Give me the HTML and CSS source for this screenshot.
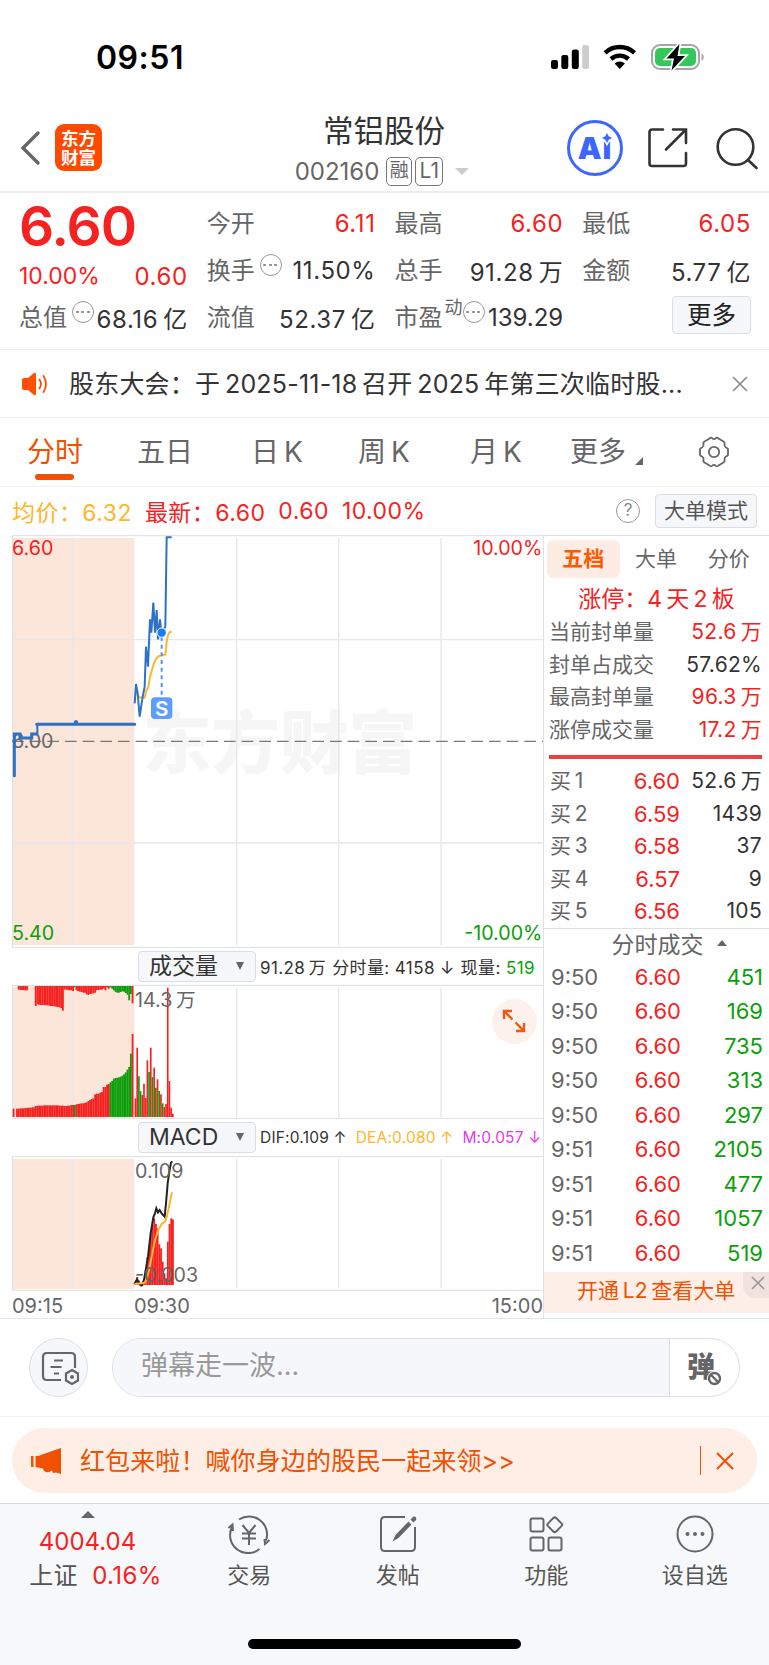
FILE: index.html
```html
<!DOCTYPE html>
<html lang="zh-CN">
<head>
    <meta charset="UTF-8">
    <meta name="viewport" content="width=device-width, initial-scale=1.0">
    <title>常铝股份 002160</title>
    <link rel="stylesheet" href="styles.css">
</head>
<body>
    <div class="status-bar">
        <span class="clock">09:51</span>
        <svg width="156" height="30" viewBox="0 0 156 30">
            <rect x="0" y="17" width="7" height="9" rx="2.2"/>
            <rect x="10.3" y="12" width="7" height="14" rx="2.2"/>
            <rect x="20.8" y="6.5" width="7" height="19.5" rx="2.2"/>
            <rect x="31.2" y="2" width="6.8" height="24" rx="2.2" fill="#ccc"/>
            <g fill="none" stroke="#000" stroke-width="4.4">
                <path d="M54 9.8a21.5 21.5 0 0 1 29.5 0"/>
                <path d="M60 16a13 13 0 0 1 17.5 0"/>
            </g>
            <path d="M63.6 20.6a7.4 7.4 0 0 1 10.3 0L68.8 26z"/>
            <rect x="101" y="2" width="47" height="24" rx="8" fill="none" stroke="#a5a5a5" stroke-width="2"/>
            <path d="M150.5 10.5c3 1.2 3 6 0 7.4z" fill="#a5a5a5"/>
            <rect x="104" y="5" width="41" height="18" rx="5" fill="#34c759"/>
            <path d="M128.500 1L115.500 15.500h7.500L120.500 27.500l13.500-14.500h-7.500z" stroke="#fff" stroke-width="3.500" paint-order="stroke"/>
        </svg>
    </div>

    <header class="nav">
        <svg class="back" width="22" height="36" viewBox="0 0 22 36"><path d="M19 3L4 18l15 15"/></svg>
        <div class="logo"><span>东方</span><span>财富</span></div>
        <div class="stock">
            <div class="stock-name">常铝股份</div>
            <div class="stock-code">002160 <span class="tag">融</span><span class="tag">L1</span><i class="caret"></i></div>
        </div>
        <div class="ai"><em>Ai</em><svg width="10" height="10" viewBox="0 0 10 10"><path d="M5 0l1.700 3.300L10 5 6.700 6.700 5 10 3.300 6.700 0 5l3.300-1.700z"/></svg></div>
        <svg class="share" width="42" height="42" viewBox="0 0 42 42"><path d="M16 2.500H5a2.500 2.500 0 0 0-2.500 2.500v31.500A2.500 2.500 0 0 0 5 39h31.500a2.500 2.500 0 0 0 2.500-2.500V26M26 2.500h13V16M38.500 3L19 22.500"/></svg>
        <svg class="search" width="44" height="44" viewBox="0 0 44 44"><circle cx="20.500" cy="20" r="17.800"/><path d="M33 33l8.500 8"/></svg>
    </header>

    <section class="quote">
        <div class="col">
            <div class="price">6.60</div>
            <div class="cell up change"><span>10.00%</span><b>0.60</b></div>
            <div class="cell"><label>总值</label><i class="dots"></i><b>68.16&thinsp;亿</b></div>
        </div>
        <div class="col">
            <div class="cell up"><label>今开</label><b>6.11</b></div>
            <div class="cell"><label>换手</label><i class="dots"></i><b>11.50%</b></div>
            <div class="cell"><label>流值</label><b>52.37&thinsp;亿</b></div>
        </div>
        <div class="col">
            <div class="cell up"><label>最高</label><b>6.60</b></div>
            <div class="cell"><label>总手</label><b>91.28&thinsp;万</b></div>
            <div class="cell pe"><label>市盈<sup>动</sup></label><i class="dots"></i><b>139.29</b></div>
        </div>
        <div class="col">
            <div class="cell up"><label>最低</label><b>6.05</b></div>
            <div class="cell"><label>金额</label><b>5.77&thinsp;亿</b></div>
            <div class="cell"><button class="more">更多</button></div>
        </div>
    </section>

    <section class="notice">
        <svg width="26" height="24" viewBox="0 0 26 24">
            <path d="M0 8q0-2 2-2h4l6-5q2-1 2 1v20q0 2-2 1l-6-5H2q-2 0-2-2z" fill="#ff5000"/>
            <path d="M17.500 7.500q3 4.500 0 9M21.500 4q5 8 0 16" fill="none" stroke="#ff5000" stroke-width="1.800" stroke-linecap="round"/>
        </svg>
        <p>股东大会：于&thinsp;2025-11-18&thinsp;召开&thinsp;2025&thinsp;年第三次临时股...</p>
        <svg width="16" height="16" viewBox="0 0 16 16"><path d="M1 1l14 14M15 1L1 15" stroke="#888" stroke-width="1.600"/></svg>
    </section>

    <nav class="tabs">
        <span class="tab active">分时</span>
        <span class="tab">五日</span>
        <span class="tab">日&thinsp;K</span>
        <span class="tab">周&thinsp;K</span>
        <span class="tab">月&thinsp;K</span>
        <span class="tab tab-more">更多<svg width="8" height="8" viewBox="0 0 8 8"><path d="M8 0v8H0z" fill="#666"/></svg></span>
        <svg class="gear" width="34" height="32" viewBox="0 0 34 32"><path d="M12.500 2.500q1.500-1.700 3 0 1.500 1.200 3 0 1.500-1.700 3 0l5 3q1.600.8 1 3-.5 1.800 1.500 3 2.500 1 2 2.500v4q.4 1.600-2 2.500-2 1.200-1.500 3 .6 2.200-1 3l-5 3q-1.500 1.700-3 0-1.500-1.200-3 0-1.500 1.700-3 0l-5-3q-1.600-.8-1-3 .5-1.800-1.500-3-2.500-.9-2-2.500v-4q-.5-1.500 2-2.500 2-1.200 1.500-3-.6-2.200 1-3z"/><circle cx="17" cy="16" r="5.200"/></svg>
    </nav>

    <div class="summary">
        <span class="avg">均价：6.32</span>
        <span>最新：6.60</span>
        <span>0.60</span>
        <span>10.00%</span>
        <i class="help">?</i>
        <button class="mode">大单模式</button>
    </div>

    <main class="market">
        <section class="charts">
            <svg class="chart" width="531" height="413" viewBox="0 0 1593 1239">
                <rect class="auction" x="2" y="9" width="365" height="1221"/>
                <text class="watermark" x="392" y="699">东方财富</text>
                <path class="grid" d="M183 9V1230M674 9V1230M980 9V1230M1287 9V1230M2 314H1593M2 924H1593"/>
                <path class="frame" d="M0 2H1593M0 1237H1593M2 2V1237"/>
                <path class="mid" d="M0 619H1593"/>
                <text class="axis" x="0" y="638">6.00</text>
                <polyline class="avg-line" points="374,475 382,487 392,488 398,488 402,470 409,455 414,425 420,405 424,390 430,375 438,365 448,361 460,359 464,320 468,300 474,291 479,290"/>
                <path class="pre-line" d="M7 722V597H24V609H59V597H74M74 568H368M190 560H194"/>
                <path class="price-line" d="M76 597V568"/>
                <polyline class="price-line" points="368,505 372,447 377,475 383,545 392,485 398,455 402,335 408,395 414,253 418,293 424,203 429,293 434,225 438,313 444,253 448,291 454,285 460,275 464,7 479,7"/>
                <path class="sell-line" d="M449 306V485"/>
                <circle class="sell-dot" cx="449" cy="293" r="14"/>
                <rect class="sell-box" x="417" y="487" width="64" height="65" rx="12"/>
                <text class="sell-text" x="449" y="542">S</text>
                <text class="axis red" x="0" y="59">6.60</text>
                <text class="axis red end" x="1591" y="59">10.00%</text>
                <text class="axis green" x="0" y="1216">5.40</text>
                <text class="axis green end" x="1591" y="1216">-10.00%</text>
            </svg>

            <div class="indicator">
                <div class="select">成交量<i></i></div>
                <p class="vol-info"><span>91.28&thinsp;万</span><span>分时量: 4158 ↓</span><span>现量: <b>519</b></span></p>
            </div>
            <div class="volume">
                <svg class="chart" width="531" height="135" viewBox="0 0 1593 405">
                    <rect class="auction" x="2" y="8" width="365" height="392"/>
                    <path class="grid" d="M183 12V400M674 12V400M980 12V400M1287 12V400"/>
                    <path class="frame" d="M0 4H1593M0 403H1593M2 4V403"/>
                    <g id="volume-bars"></g>
                    <text class="axis" x="369" y="68">14.3&thinsp;万</text>
                </svg>
                <div class="expand"><svg width="24" height="24" viewBox="0 0 24 24"><path d="M2 10V2h8M2.500 2.500l8 8M22 14v8h-8M21.500 21.500l-8-8"/></svg></div>
            </div>

            <div class="indicator">
                <div class="select">MACD<i></i></div>
                <p class="macd-info"><span>DIF:0.109 ↑</span><span class="dea">DEA:0.080 ↑</span><span class="m">M:0.057 ↓</span></p>
            </div>
            <svg class="chart" width="531" height="137" viewBox="0 0 1593 411">
                <rect class="auction" x="2" y="12" width="365" height="390"/>
                <path class="grid" d="M183 12V400M674 12V400M980 12V400M1287 12V400"/>
                <path class="frame" d="M0 5H1593M0 406H1593M2 5V406"/>
                <g id="macd-bars"></g>
                <polyline class="dif-line" points="367,388 375,373 382,388 389,391 396,375 402,340 408,305 416,235 424,187 429,175 433,160 438,172 443,165 449,175 458,185 462,145 467,85 472,50 477,23 481,19"/>
                <polyline class="avg-line" points="367,388 389,385 399,383 409,355 419,305 429,255 439,225 449,207 461,198 469,165 475,135 480,112"/>
                <text class="axis" x="369" y="70">0.109</text>
                <text class="axis" x="369" y="381">-0.003</text>
            </svg>
            <div class="times"><span>09:15</span><span>09:30</span><span>15:00</span></div>
        </section>

        <aside class="book">
            <div class="book-tabs"><span class="on">五档</span><span>大单</span><span>分价</span></div>
            <div class="limit">涨停：4&thinsp;天&thinsp;2&thinsp;板</div>
            <div class="stat"><span>当前封单量</span><b class="up">52.6&thinsp;万</b></div>
            <div class="stat"><span>封单占成交</span><b>57.62%</b></div>
            <div class="stat"><span>最高封单量</span><b class="up">96.3&thinsp;万</b></div>
            <div class="stat"><span>涨停成交量</span><b class="up">17.2&thinsp;万</b></div>
            <div class="ratio"></div>
            <div class="row"><span>买&thinsp;1</span><span class="up">6.60</span><b>52.6&thinsp;万</b></div>
            <div class="row"><span>买&thinsp;2</span><span class="up">6.59</span><b>1439</b></div>
            <div class="row"><span>买&thinsp;3</span><span class="up">6.58</span><b>37</b></div>
            <div class="row"><span>买&thinsp;4</span><span class="up">6.57</span><b>9</b></div>
            <div class="row"><span>买&thinsp;5</span><span class="up">6.56</span><b>105</b></div>
            <div class="trades-title">分时成交<i></i></div>
            <div class="trade"><span>9:50</span><span class="up">6.60</span><b>451</b></div>
            <div class="trade"><span>9:50</span><span class="up">6.60</span><b>169</b></div>
            <div class="trade"><span>9:50</span><span class="up">6.60</span><b>735</b></div>
            <div class="trade"><span>9:50</span><span class="up">6.60</span><b>313</b></div>
            <div class="trade"><span>9:50</span><span class="up">6.60</span><b>297</b></div>
            <div class="trade"><span>9:51</span><span class="up">6.60</span><b>2105</b></div>
            <div class="trade"><span>9:51</span><span class="up">6.60</span><b>477</b></div>
            <div class="trade"><span>9:51</span><span class="up">6.60</span><b>1057</b></div>
            <div class="trade"><span>9:51</span><span class="up">6.60</span><b>519</b></div>
            <div class="level2">开通&thinsp;L2&thinsp;查看大单
                <div class="level2-close"><svg width="14" height="14" viewBox="0 0 14 14"><path d="M1 1l12 12M13 1L1 13"/></svg></div>
            </div>
        </aside>
    </main>

    <section class="danmu">
        <div class="danmu-set">
            <svg width="38" height="34" viewBox="0 0 38 34"><path d="M34 17V6q0-4-4-4H6Q2 2 2 6v19q0 4 4 4h14M13 9.500h9M9.500 16h11M13 22.500h5"/><path d="M31 19l6 3.500v7L31 33l-6-3.500v-7z"/><circle class="fill" cx="31" cy="26" r="2"/></svg>
        </div>
        <div class="danmu-box">
            <span class="danmu-input">弹幕走一波...</span>
            <div class="danmu-off"><b>弹</b><svg width="15" height="15" viewBox="0 0 15 15"><circle cx="7.500" cy="7.500" r="5.500"/><path d="M4 4l7 7"/></svg></div>
        </div>
    </section>

    <section class="promo-wrap">
        <div class="promo">
            <svg width="30" height="26" viewBox="0 0 30 26" fill="#ef5100"><path d="M0 8h2.500v11H0zM4.500 8H7l23-8v26l-5-1.500-3 .5-1-2.500-3 1.500q-5 1-6-3.500L4.500 19z"/></svg>
            <p>红包来啦！喊你身边的股民一起来领&gt;&gt;</p>
            <i class="bar"></i>
            <svg width="18" height="18" viewBox="0 0 18 18"><path d="M1 1l16 16M17 1L1 17" stroke="#ef5100" stroke-width="2"/></svg>
        </div>
    </section>

    <footer class="bottom">
        <div class="items">
            <div class="index">
                <i></i>
                <div class="up">4004.04</div>
                <div>上证 <span class="up">0.16%</span></div>
            </div>
            <div class="item">
                <svg width="44" height="40" viewBox="0 0 44 40"><path d="M12 5.500A18 18 0 0 1 39 26.500M32.500 35A18 18 0 0 1 5 13M1.500 14l4-3.500L6 17M42.500 26L38 30l-.5-5M15.500 11l6.500 8 6.500-8M15 19.500h14M15 24.500h14M22 19v12"/></svg>
                <span>交易</span>
            </div>
            <div class="item">
                <svg width="44" height="40" viewBox="0 0 44 40"><path d="M29 3H9Q5 3 5 7v26q0 4 4 4h26q4 0 4-4V13"/><path class="fill" d="M32.500 7.500l3 3-13 13.500-6 3.500 3-6.500zM35.500 4.500l2-2q1.500-.5 2.500 1 .5 1.500 0 2.500l-2.500 2.500-3-3z"/></svg>
                <span>发帖</span>
            </div>
            <div class="item">
                <svg width="44" height="40" viewBox="0 0 44 40"><rect x="6.500" y="4.500" width="13" height="13" rx="2"/><rect x="6.500" y="23.500" width="13" height="13" rx="2"/><rect x="24.500" y="23.500" width="13" height="13" rx="2"/><rect x="25" y="5" width="11.500" height="11.500" rx="2" transform="rotate(45 30.750 10.750)"/></svg>
                <span>功能</span>
            </div>
            <div class="item">
                <svg width="44" height="40" viewBox="0 0 44 40"><circle cx="22" cy="20" r="17.500"/><circle class="fill" cx="14.500" cy="20" r="2"/><circle class="fill" cx="22" cy="20" r="2"/><circle class="fill" cx="29.500" cy="20" r="2"/></svg>
                <span>设自选</span>
            </div>
        </div>
        <div class="home"></div>
    </footer>

    <script>
        const RED = '#f52222';
        const GREEN = '#0a9f0a';

        function bar(group, x, y, width, height, color) {
            if (height < 0) {
                y += height;
                height = -height;
            }
            const rect = document.createElementNS('http://www.w3.org/2000/svg', 'rect');
            rect.setAttribute('x', x);
            rect.setAttribute('y', y);
            rect.setAttribute('width', width);
            rect.setAttribute('height', height);
            rect.setAttribute('fill', color);
            group.appendChild(rect);
        }

        // call auction: matched volume (bottom) and unmatched volume (top)
        const matched = [25, 0, 25, 25, 26, 26, 26, 27, 27, 28, 28, 29, 29, 33, 34, 34, 34, 34, 35, 35, 35, 35, 35, 35, 35, 35, 35,
            34, 34, 34, 33, 33, 34, 34, 36, 36, 36, 38, 39, 40, 41, 41, 42, 44, 48, 51, 54, 56, 68, 70, 70, 73, 75, 90, 90, 97, 99,
            104, 108, 115, 117, 118, 119, 121, 124, 128, 134, 142, 150, 190, 249];
        const unmatched = [0, 0, 0, 11, 12, 12, 12, 13, 13, 0, 0, 0, 0, 60, 55, 56, 57, 57, 57, 58, 58, 59, 60, 60, 61, 62, 63, 64,
            66, 74, 11, 11, 12, 13, 13, 15, 4, 13, 15, 17, 18, 20, 20, 25, 27, 24, 23, 22, 20, 12, 12, 11, 11, 8, 13, 4, 8,
            4, 8, 13, 18, 20, 20, 18, 16, 17, 21, 26, 43, 24, 52];
        // minute volume, negative for falling minutes
        const minutes = [56, 208, -122, -78, 66, 100, 57, 170, -135, 208, -120, 148, -88, 113, -78, 68, -41, 30, 39, 388, 108, 28, 10];
        const macd = [3, 24, 14, -4, -3, 12, 45, 84, 110, 155, 180, 200, 183, 170, 122, 110, 70, 35, 20, 130, 183, 200, 197];

        const volume = document.getElementById('volume-bars');
        matched.forEach((height, i) => {
            const color = i === 36 || (i > 56 && i < 70) ? GREEN : RED;
            bar(volume, 2 + i * 5.1, 399 - height, 5.5, height, color);
            bar(volume, 2 + i * 5.1, 6, 5.5, unmatched[i], color);
        });
        minutes.forEach((value, i) => {
            const height = Math.abs(value);
            bar(volume, 368 + i * 5.09, 399 - height, 5, height, value > 0 ? RED : GREEN);
        });

        const macdBars = document.getElementById('macd-bars');
        macd.forEach((value, i) => {
            bar(macdBars, 368 + i * 5.09, 390 - value, 5.5, value, value > 0 ? RED : GREEN);
        });
    </script>
</body>
</html>
```
FILE: styles.css
```css
* {
    box-sizing: border-box;
}
body {
    margin: 0;
    width: 769px;
    background-color: #fff;
    color: #333;
    font-family: Inter, "Noto Sans CJK SC", sans-serif;
    font-size: 24px;
}
p {
    margin: 0;
}
b {
    font-weight: 400;
}
svg {
    display: block;
    flex: none;
}
button {
    padding: 0;
    font-family: inherit;
    background-color: #f6f7fa;
    border: 1px solid #dcdee6;
    border-radius: 4px;
}
.up {
    color: #f52222;
}

/* status bar */
.status-bar {
    display: flex;
    justify-content: space-between;
    align-items: center;
    height: 115px;
    padding: 0 62px 0 96px;
}
.clock {
    font-size: 32px;
    font-weight: 600;
    letter-spacing: 0.5px;
    color: #000;
}

/* header */
.nav {
    display: flex;
    align-items: center;
    height: 78px;
    padding-left: 19px;
    border-bottom: 2px solid #ececec;
}
.nav svg {
    fill: none;
    stroke: #333;
    stroke-width: 2.6;
    stroke-linecap: round;
}
.nav .back {
    stroke: #666;
    stroke-width: 3.4;
    margin-top: -10px;
}
.logo {
    display: flex;
    flex-direction: column;
    align-items: center;
    justify-content: center;
    width: 47px;
    height: 47px;
    margin: -11px 0 0 14px;
    border-radius: 9px;
    background-color: #ff4a00;
    color: #fff;
    font-size: 17.5px;
    font-weight: 700;
    line-height: 19px;
}
.stock {
    width: 220px;
    margin-left: 172px;
    text-align: center;
}
.stock-name {
    height: 37px;
    font-size: 30.5px;
    line-height: 26px;
}
.stock-code {
    display: flex;
    align-items: center;
    justify-content: center;
    height: 34px;
    margin-left: -4px;
    color: #666;
    white-space: nowrap;
}
.tag {
    width: 26px;
    height: 29px;
    margin-left: 7px;
    border: 1.5px solid #777;
    border-radius: 5px;
    font-size: 19px;
    line-height: 25px;
}
.tag + .tag {
    width: 28px;
    margin-left: 3px;
    font-size: 21px;
}
.caret {
    margin-left: 12px;
    border: 7px solid transparent;
    border-top: 7px solid #ccc;
    border-bottom: 0;
}
.ai {
    position: relative;
    width: 56px;
    height: 56px;
    margin: -10px 0 0 73px;
    border: 3px solid #3b66ff;
    border-radius: 50%;
    text-align: center;
    line-height: 51px;
}
.ai em {
    color: #3b66ff;
    font-size: 30px;
    font-style: normal;
    font-weight: 900;
    letter-spacing: 1px;
}
.nav .ai svg {
    position: absolute;
    top: 10px;
    right: 8px;
    fill: #3b66ff;
    stroke: #fff;
    stroke-width: 3;
    paint-order: stroke;
    overflow: visible;
}
.share {
    margin: -10px 0 0 24px;
}
.search {
    margin: -9px 0 0 26px;
}

/* quote */
.quote {
    display: grid;
    grid-template-columns: repeat(4, 1fr);
    column-gap: 19px;
    height: 157px;
    padding: 7px 18px 0 19px;
    border-bottom: 1px solid #eee;
}
.cell {
    display: flex;
    align-items: center;
    justify-content: space-between;
    height: 47px;
    white-space: nowrap;
}
.cell label {
    margin-top: -4px;
    color: #666;
}
.cell b {
    margin-left: auto;
    letter-spacing: 0.6px;
}
.price {
    height: 54px;
    color: #f52222;
    font-size: 55px;
    font-weight: 600;
    line-height: 52px;
    letter-spacing: -1px;
}
.change {
    height: 40px;
    padding-top: 4px;
}
.change span {
    font-size: 23px;
}
.dots {
    width: 22px;
    height: 22px;
    margin: -11px 0 0 5px;
    border: 1.5px solid #999;
    border-radius: 50%;
    background: radial-gradient(circle, #888 1px, transparent 1.5px) 1.5px 0 / 5px 100% no-repeat,
                radial-gradient(circle, #888 1px, transparent 1.5px) 7px 0 / 5px 100% no-repeat,
                radial-gradient(circle, #888 1px, transparent 1.5px) 12.5px 0 / 5px 100% no-repeat;
}
.pe .dots {
    margin-left: 0;
}
.pe label {
    display: flex;
}
.pe sup {
    font-size: 18px;
    line-height: 20px;
    margin-left: 2px;
}
.pe b {
    letter-spacing: 0;
}
.more {
    width: 79px;
    height: 38px;
    margin: -5px 0 0 auto;
    font-size: 24.5px;
    line-height: 34px;
    color: #222;
}

/* notice */
.notice {
    display: flex;
    align-items: center;
    height: 68px;
    padding: 0 21px 0 22px;
    border-bottom: 1px solid #f0f0f0;
    font-size: 25px;
}
.notice p {
    flex: 1;
    margin: -4px 0 0 21px;
    letter-spacing: 0.2px;
}

/* period tabs */
.tabs {
    display: grid;
    grid-template-columns: 110px 114px 107px 112px 100px 127px 34px;
    align-items: center;
    height: 69px;
    padding-left: 27px;
    border-bottom: 1px solid #eee;
    color: #666;
    font-size: 28px;
}
.tab {
    position: relative;
    margin-top: -4px;
}
.tab.active {
    color: #ef5100;
}
.active::after {
    content: "";
    position: absolute;
    left: 8px;
    bottom: -10px;
    width: 39px;
    height: 6px;
    border-radius: 3px;
    background-color: #ef5100;
}
.tab-more {
    display: flex;
    align-items: flex-end;
}
.tab-more svg {
    margin: 0 0 5px 9px;
}
.gear {
    fill: none;
    stroke: #666;
    stroke-width: 1.8;
}

/* summary line */
.summary {
    display: flex;
    align-items: center;
    height: 48px;
    padding: 0 12px;
    color: #f52222;
    font-size: 23px;
}
.summary span {
    margin: -1px 13px 0 0;
    letter-spacing: 0.45px;
}
.summary .avg {
    color: #feb62c;
}
.help {
    width: 24px;
    height: 24px;
    margin-left: auto;
    border: 1.5px solid #999;
    border-radius: 50%;
    color: #888;
    font-size: 17px;
    font-style: normal;
    line-height: 21px;
    text-align: center;
}
.mode {
    width: 102px;
    height: 34px;
    margin-left: 15px;
    color: #555;
    font-size: 21px;
    line-height: 30px;
}

/* charts */
.market {
    display: flex;
    height: 784px;
    border-bottom: 1px solid #e4e6ea;
}
.charts {
    width: 531px;
    margin-left: 12px;
}
.auction {
    fill: #fce5d9;
}
.grid {
    fill: none;
    stroke: #e5e8ef;
    stroke-width: 4;
}
.frame {
    fill: none;
    stroke: #dcdee2;
    stroke-width: 3;
}
.mid {
    stroke: #777;
    stroke-width: 4;
    stroke-dasharray: 35 18;
}
.axis {
    fill: #666;
    font-size: 59px;
}
.red {
    fill: #f52222;
}
.green {
    fill: #0a9f0a;
}
.end {
    text-anchor: end;
}
.watermark {
    fill: #f6f6f6;
    font-size: 206px;
    font-weight: 900;
}
.price-line,
.pre-line,
.avg-line,
.dif-line {
    fill: none;
    stroke: #2d72c4;
    stroke-width: 6;
}
.pre-line {
    stroke-width: 9;
    stroke-linecap: round;
}
.avg-line {
    stroke: #feb62c;
}
.dif-line {
    stroke: #222;
}
.sell-line {
    stroke: #4f94fc;
    stroke-width: 6;
    stroke-dasharray: 12 11;
}
.sell-dot {
    fill: #1b7af5;
    stroke: #fff;
    stroke-width: 3;
}
.sell-box {
    fill: #5c9dfd;
}
.sell-text {
    fill: #fff;
    font-size: 62px;
    font-weight: 600;
    text-anchor: middle;
}
.indicator {
    display: flex;
    align-items: center;
    height: 36px;
    padding-left: 126px;
}
.select {
    display: flex;
    align-items: center;
    justify-content: space-between;
    width: 118px;
    height: 31px;
    padding: 0 11px 0 10px;
    background-color: #f6f7fa;
    border: 1px solid #dcdee6;
    border-radius: 4px;
    font-size: 23px;
    line-height: 29px;
    white-space: nowrap;
}
.select i {
    border: 4.5px solid transparent;
    border-top: 8px solid #666;
    border-bottom: 0;
}
.indicator p {
    display: flex;
    margin-left: 4px;
    white-space: nowrap;
}
.vol-info {
    gap: 6px;
    font-size: 17px;
    letter-spacing: 0.4px;
}
.vol-info b {
    color: #0a9f0a;
}
.macd-info {
    gap: 9px;
    font-size: 15.5px;
    letter-spacing: 0.2px;
}
.dea {
    color: #feb62c;
}
.m {
    color: #e338ea;
}
.volume {
    position: relative;
}
.expand {
    position: absolute;
    top: 15px;
    right: 6px;
    width: 45px;
    height: 45px;
    padding: 10px;
    border-radius: 50%;
    background-color: #fdf1eb;
}
.expand path {
    fill: none;
    stroke: #ef5a10;
    stroke-width: 2.4;
}
.times {
    display: flex;
    height: 26px;
    color: #666;
    font-size: 20px;
    line-height: 29px;
}
.times span {
    width: 122px;
}
.times span:last-child {
    margin-left: auto;
    text-align: right;
}

/* order book */
.book {
    width: 226px;
    border-left: 1px solid #e0e2e8;
    color: #666;
    font-size: 21px;
}
.book b {
    color: #333;
}
.book b.up {
    color: #f52222;
}
.book-tabs {
    display: flex;
    height: 46px;
    padding: 4px 4px 3px 3px;
    border-top: 1px solid #dcdee2;
    line-height: 38px;
}
.book-tabs span {
    width: 73px;
    text-align: center;
}
.book-tabs .on {
    background-color: #fdece4;
    border-radius: 6px;
    color: #ff5a00;
    font-weight: 700;
}
.limit {
    height: 35px;
    color: #f52222;
    font-size: 23px;
    line-height: 36px;
    text-align: center;
}
.stat,
.row,
.trade {
    display: flex;
    justify-content: space-between;
    height: 32.5px;
    padding: 0 7px 0 6px;
    line-height: 32px;
}
.stat b,
.row b {
    letter-spacing: 0.3px;
}
.stat span {
    margin-left: -1px;
}
.ratio {
    height: 4px;
    margin: 9px 7px 6px 5px;
    background-color: #e94242;
}
.row span:first-child,
.trade span:first-child {
    width: 60px;
}
.row .up,
.trade .up {
    width: 70px;
    text-align: right;
    font-size: 22px;
}
.row b,
.trade b {
    width: 82px;
    text-align: right;
    white-space: nowrap;
}
.trades-title {
    display: flex;
    align-items: center;
    justify-content: center;
    height: 34px;
    padding: 0 0 4px 25px;
    border-top: 1px solid #dcdee2;
    font-size: 23px;
}
.trades-title i {
    margin-left: 13px;
    border: 5px solid transparent;
    border-bottom: 6px solid #666;
    border-top: 0;
}
.trade {
    height: 34.5px;
    padding: 0 6px 0 7px;
    line-height: 31px;
    font-size: 22px;
}
.book .trade b {
    color: #0a9f0a;
}
.level2 {
    position: relative;
    height: 41px;
    padding-left: 33px;
    background-color: #fdefe8;
    color: #ef5100;
    line-height: 38px;
}
.level2-close {
    position: absolute;
    top: 0;
    right: 0;
    width: 26px;
    height: 26px;
    padding: 4px 0 0 8px;
    border-bottom-left-radius: 12px;
    background-color: #f0e3dd;
}
.level2-close path {
    stroke: #999;
    stroke-width: 1.6;
}

/* danmu */
.danmu {
    display: flex;
    align-items: center;
    height: 98px;
    padding: 0 29px;
    border-bottom: 1px solid #f0f0f0;
}
.danmu-set {
    display: flex;
    align-items: center;
    justify-content: center;
    width: 59px;
    height: 59px;
    border: 1px solid #dcdee6;
    border-radius: 50%;
    background-color: #f6f7fa;
}
.danmu-set svg {
    margin-left: 2px;
    fill: none;
    stroke: #666;
    stroke-width: 2.2;
}
.danmu-box {
    display: flex;
    width: 628px;
    height: 59px;
    margin-left: 24px;
    border: 1px solid #dcdee6;
    border-radius: 30px;
    overflow: hidden;
}
.danmu-input {
    flex: 1;
    padding-left: 28px;
    background-color: #f6f7fa;
    color: #999;
    font-size: 27px;
    line-height: 53px;
}
.danmu-off {
    position: relative;
    width: 70px;
    padding-left: 17px;
    border-left: 1px solid #dcdee6;
    line-height: 56px;
}
.danmu-off b {
    color: #666;
    font-size: 28px;
    font-weight: 900;
}
.danmu-off svg {
    position: absolute;
    left: 37px;
    top: 32px;
    border-radius: 50%;
    background-color: #fff;
    fill: none;
    stroke: #666;
    stroke-width: 2.4;
}

/* promo */
.promo-wrap {
    height: 86px;
    padding: 11px 12px;
}
.promo {
    display: flex;
    align-items: center;
    height: 65px;
    padding: 0 23px 0 19px;
    border-radius: 33px;
    background-color: #feeee6;
    color: #ef5100;
    font-size: 25px;
}
.promo p {
    flex: 1;
    margin: -3px 0 0 19px;
    letter-spacing: 0.1px;
}
.bar {
    width: 1.5px;
    height: 29px;
    margin-right: 15px;
    background-color: #ef5100;
}

/* bottom bar */
.bottom {
    height: 162px;
    border-top: 1px solid #d8dade;
    background-color: #f6f8fa;
}
.items {
    display: flex;
    height: 135px;
}
.index {
    width: 175px;
    height: 100px;
    color: #555;
    text-align: center;
    line-height: 34px;
}
.index div:last-child {
    padding-left: 16px;
    word-spacing: 7px;
    letter-spacing: 0.4px;
}
.index i {
    display: block;
    width: 14px;
    margin: 7px 0 7px 81px;
    border: 7px solid transparent;
    border-bottom: 7px solid #666;
    border-top: 0;
}
.item {
    display: flex;
    flex-direction: column;
    align-items: center;
    width: 148.5px;
    padding-top: 10px;
    color: #555;
    font-size: 22px;
}
.item svg {
    fill: none;
    stroke: #666;
    stroke-width: 2;
}
.item span {
    margin-top: 3px;
}
.item .fill,
.danmu-set .fill {
    fill: #666;
    stroke: none;
}
.home {
    width: 273px;
    height: 10px;
    margin: 0 auto;
    border-radius: 5px;
    background-color: #000;
}
```
